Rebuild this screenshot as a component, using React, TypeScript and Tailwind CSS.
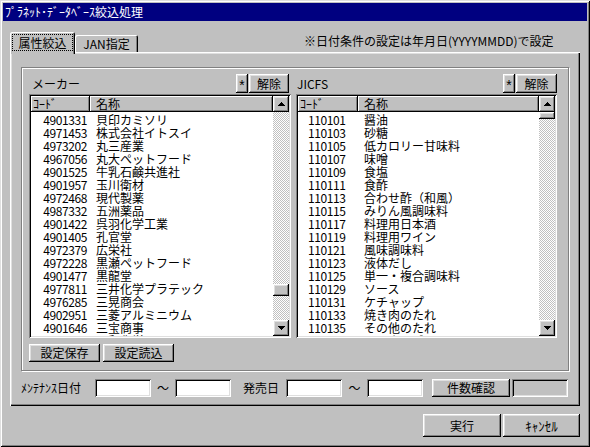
import React from 'react';

const raised =
  'bg-[#c0c0c0] shadow-[inset_-1px_-1px_#000000,inset_1px_1px_#ffffff,inset_-2px_-2px_#808080,inset_2px_2px_#dfdfdf]';
const sunken =
  'shadow-[inset_1px_1px_#808080,inset_-1px_-1px_#ffffff,inset_2px_2px_#000000,inset_-2px_-2px_#dfdfdf]';
const headerCell =
  'bg-[#c0c0c0] shadow-[inset_-1px_-1px_#000000,inset_1px_1px_#ffffff,inset_-2px_-2px_#808080]';

const makers: [string, string][] = [
  ['4901331', '貝印カミソリ'],
  ['4971453', '株式会社イトスイ'],
  ['4973202', '丸三産業'],
  ['4967056', '丸大ペットフード'],
  ['4901525', '牛乳石鹸共進社'],
  ['4901957', '玉川衛材'],
  ['4972468', '現代製薬'],
  ['4987332', '五洲薬品'],
  ['4901422', '呉羽化学工業'],
  ['4901405', '孔官堂'],
  ['4972379', '広栄社'],
  ['4972228', '黒瀬ペットフード'],
  ['4901477', '黒龍堂'],
  ['4977811', '三井化学プラテック'],
  ['4976285', '三晃商会'],
  ['4902951', '三菱アルミニウム'],
  ['4901646', '三宝商事'],
  ['4960911', '三和化学'],
];

const jicfs: [string, string][] = [
  ['110101', '醤油'],
  ['110103', '砂糖'],
  ['110105', '低カロリー甘味料'],
  ['110107', '味噌'],
  ['110109', '食塩'],
  ['110111', '食酢'],
  ['110113', '合わせ酢（和風）'],
  ['110115', 'みりん風調味料'],
  ['110117', '料理用日本酒'],
  ['110119', '料理用ワイン'],
  ['110121', '風味調味料'],
  ['110123', '液体だし'],
  ['110125', '単一・複合調味料'],
  ['110129', 'ソース'],
  ['110131', 'ケチャップ'],
  ['110133', '焼き肉のたれ'],
  ['110135', 'その他のたれ'],
  ['110137', 'マヨネーズ'],
];

function Arrow({ down }: { down?: boolean }) {
  return (
    <svg width="7" height="4" viewBox="0 0 7 4" shapeRendering="crispEdges">
      <polygon points={down ? '0,0 7,0 3.5,4' : '3.5,0 7,4 0,4'} fill="#000" />
    </svg>
  );
}

function ScrollButton({ down }: { down?: boolean }) {
  return (
    <div className={`${raised} flex h-[16px] w-[16px] shrink-0 items-center justify-center`}>
      <Arrow down={down} />
    </div>
  );
}

function ListBox({
  rows,
  right,
  thumbTop,
  thumbH,
}: {
  rows: [string, string][];
  right?: boolean;
  thumbTop: number;
  thumbH: string;
}) {
  const codeW = right ? 'w-[60px]' : 'w-[59px]';
  return (
    <div className={`${sunken} flex h-[244px] bg-white p-[2px]`}>
      <div className="flex min-w-0 flex-1 flex-col overflow-hidden">
        <div className="flex h-[16px] shrink-0 text-[12px] leading-[15px]">
          <div className={`${headerCell} ${codeW} pl-[2px]`}>ｺｰﾄﾞ</div>
          <div className={`${headerCell} flex-1 pl-[6px]`}>名称</div>
        </div>
        <div className="pt-[1px]">
          {rows.map(([code, name]) => (
            <div key={code} className="flex h-[13px] text-[12px] leading-[13px] whitespace-nowrap">
              <div
                className={`${codeW} shrink-0 tracking-[-0.4px] ${right ? 'pl-[10px] text-left' : 'pr-[3px] text-right'}`}
              >
                {code}
              </div>
              <div className="pl-[6px]">{name}</div>
            </div>
          ))}
        </div>
      </div>
      <div className="flex w-[16px] shrink-0 flex-col">
        <ScrollButton />
        <div className="flex flex-1 flex-col bg-[image:repeating-conic-gradient(#c0c0c0_0%_25%,#ffffff_0%_50%)] bg-size-[2px_2px]">
          <div style={{ marginTop: thumbTop }} className={`${raised} ${thumbH} w-[16px]`} />
        </div>
        <ScrollButton down />
      </div>
    </div>
  );
}

function Field({ gray }: { gray?: boolean }) {
  return <div className={`${sunken} h-[18px] w-[56px] ${gray ? 'bg-[#c0c0c0]' : 'bg-white'}`} />;
}

function StarButton() {
  return (
    <div className={`${raised} ml-auto flex h-[19px] w-[12px] justify-center pt-[4px] font-['Liberation_Sans',sans-serif] text-[14px] leading-none`}>
      *
    </div>
  );
}

export default function App() {
  return (
    <div className="flex h-[447px] w-[590px] flex-col bg-[#c0c0c0] p-[3px] font-['Noto_Sans_CJK_JP',sans-serif] text-[12px] text-black shadow-[inset_1px_1px_#dfdfdf,inset_-1px_-1px_#000000,inset_2px_2px_#ffffff,inset_-2px_-2px_#808080]">
      {/* title */}
      <div className="flex h-[18px] items-center bg-[#000080] pl-[2px] text-[12px] leading-none text-white">
        ﾌﾟﾗﾈｯﾄ･ﾃﾞｰﾀﾍﾞｰｽ絞込処理
      </div>

      <div className="px-[7px]">
        {/* tabs */}
        <div className="mt-[11px] flex h-[20px] items-end">
          <div className="relative z-10 -mb-[2px] h-[22px] w-[65px] rounded-t-[2px] bg-[#c0c0c0] p-[2px] shadow-[inset_1px_1px_#ffffff,inset_-1px_0_#000000,inset_-2px_0_#808080]">
            <div className="flex h-[17px] items-center justify-center border border-dotted border-black leading-none">
              属性絞込
            </div>
          </div>
          <div className="flex h-[17px] w-[63px] items-center justify-center rounded-t-[2px] bg-[#c0c0c0] leading-none shadow-[inset_1px_1px_#ffffff,inset_-1px_0_#000000,inset_-2px_0_#808080]">
            JAN指定
          </div>
          <div className="mb-[4px] ml-[166px] self-center pt-[1px] leading-none whitespace-nowrap">
            ※日付条件の設定は年月日(YYYYMMDD)で設定
          </div>
        </div>

        {/* panel */}
        <div className="h-[354px] px-[11px] pt-[15px] shadow-[inset_1px_1px_#ffffff,inset_-1px_-1px_#000000,inset_-2px_-2px_#808080,inset_2px_2px_#dfdfdf]">
          <div className="h-[304px] border border-[#808080] pt-[6px] pl-[7px] shadow-[inset_1px_1px_#ffffff,1px_1px_#ffffff]">
            <div className="flex gap-[5px]">
              <div className="w-[262px]">
                <div className="flex h-[20px] items-center pb-[1px]">
                  <span className="pl-[3px] leading-none">メーカー</span>
                  <StarButton />
                  <div className={`${raised} mr-[2px] ml-[1px] flex h-[19px] w-[40px] items-center justify-center leading-none`}>
                    解除
                  </div>
                </div>
                <ListBox rows={makers} thumbTop={172} thumbH="h-[12px]" />
                <div className="mt-[6px] flex gap-[3px]">
                  <div className={`${raised} flex h-[18px] w-[71px] items-center justify-center leading-none`}>設定保存</div>
                  <div className={`${raised} flex h-[18px] w-[71px] items-center justify-center leading-none`}>設定読込</div>
                </div>
              </div>
              <div className="w-[261px]">
                <div className="flex h-[20px] items-center pb-[1px]">
                  <span className="pl-[1px] leading-none">JICFS</span>
                  <StarButton />
                  <div className={`${raised} ml-[1px] flex h-[19px] w-[41px] items-center justify-center leading-none`}>
                    解除
                  </div>
                </div>
                <ListBox rows={jicfs} right thumbTop={0} thumbH="h-[7px]" />
              </div>
            </div>
          </div>

          {/* date row */}
          <div className="mt-[8px] flex h-[18px] items-center leading-none">
            <span className="w-[74px] whitespace-nowrap">ﾒﾝﾃﾅﾝｽ日付</span>
            <Field />
            <span className="w-[24px] text-center">～</span>
            <Field />
            <span className="ml-[12px] w-[43px]">発売日</span>
            <Field />
            <span className="w-[25px] text-center">～</span>
            <Field />
            <div className={`${raised} ml-[9px] flex h-[18px] w-[78px] items-center justify-center`}>件数確認</div>
            <div className="ml-[2px]">
              <Field gray />
            </div>
          </div>
        </div>

        {/* buttons */}
        <div className="mt-[8px] flex justify-end gap-[2px]">
          <div className={`${raised} flex h-[23px] w-[78px] items-center justify-center leading-none`}>実行</div>
          <div className={`${raised} flex h-[23px] w-[77px] items-center justify-center text-[13px] leading-none`}>ｷｬﾝｾﾙ</div>
        </div>
      </div>
    </div>
  );
}
